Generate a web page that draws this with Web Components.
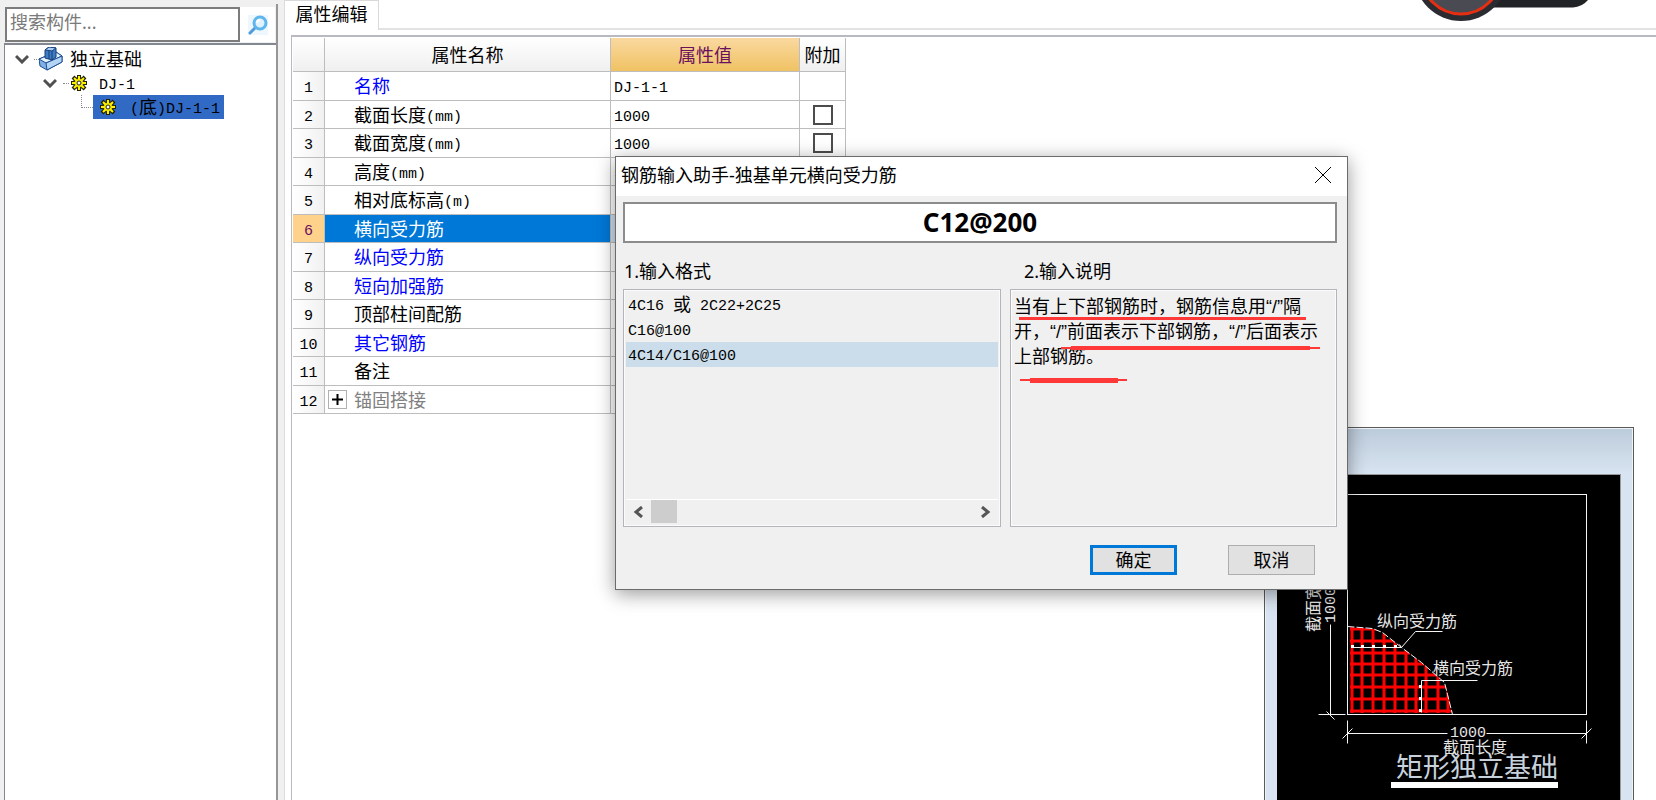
<!DOCTYPE html>
<html lang="zh-CN">
<head>
<meta charset="utf-8">
<title>属性编辑</title>
<style>
  html, body {
    margin: 0;
    height: 100%;
    overflow: hidden;
  }
  body {
    font: 18px/24px "Noto Sans", "Noto Sans CJK SC", sans-serif;
    color: #000;
    background: #fff;
    --mono: "Liberation Mono", "Noto Sans CJK SC", monospace;
    --line: #bdbdbd;
    --face: #f0f0f0;
  }
</style>
</head>
<body>
<bim-app>
  <component-tree slot="side"></component-tree>
  <property-editor></property-editor>
  <preview-window slot="float"></preview-window>
  <record-widget slot="float"></record-widget>
  <rebar-dialog slot="float" heading="钢筋输入助手-独基单元横向受力筋" value="C12@200"></rebar-dialog>
</bim-app>

<script>
// half-width runs go in a mono span, so that two of them are as wide as one CJK glyph
const mixed = text => text.replace(/[\x20-\x7e]+/g, run => `<span class="half">${run}</span>`);

const shared = `
  :host, * { box-sizing: border-box; }
  .half { font-family: var(--mono); font-size: 15px; line-height: 1; vertical-align: 1px; white-space: pre; }
  button, input { font: inherit; color: inherit; margin: 0; }
  button { padding: 0; border: 0; background: none; }
  svg { display: block; }
`;

class BimElement extends HTMLElement {
  constructor() {
    super();
    this.attachShadow({mode: 'open'});
  }

  connectedCallback() {
    this.shadowRoot.innerHTML = `<style>${shared}</style>${this.render()}`;
  }
}

class BimApp extends BimElement {
  render() {
    return `
      <style>
        :host {
          display: grid;
          grid-template-columns: 285px 1fr;
          height: 100vh;
          position: relative;
          overflow: hidden;
        }
      </style>
      <slot name="side"></slot>
      <slot></slot>
      <slot name="float"></slot>
    `;
  }
}

class GearIcon extends BimElement {
  render() {
    return `
      <style>
        :host { display: block; }
      </style>
      <svg width="16" height="16" viewBox="0 0 16 16">
        <g stroke="#222200" stroke-width="4">
          <path d="M8 0V16M0 8H16M2 2L14 14M14 2L2 14"/>
        </g>
        <circle cx="8" cy="8" r="6" fill="#333300"/>
        <path d="M8 1V15M1 8H15M3 3L13 13M13 3L3 13" stroke="#fff200" stroke-width="2"/>
        <circle cx="8" cy="8" r="4" fill="#f6ee00"/>
        <circle cx="8" cy="8" r="2" fill="#fff" stroke="#222"/>
      </svg>
    `;
  }
}

class ComponentTree extends BimElement {
  render() {
    const chevron = `
      <svg width="14" height="10" viewBox="0 0 14 10">
        <path d="M1 2L7 8L13 2" fill="none" stroke="#505050" stroke-width="3"/>
      </svg>`;
    return `
      <style>
        :host {
          display: flex;
          flex-direction: column;
          padding: 4px 6px 0 4px;
          background: var(--face);
          border-right: 1px solid #dcdcdc;
        }
        .panel {
          flex: 1;
          display: flex;
          flex-direction: column;
          border-right: 2px solid #969696;
        }
        .search {
          display: flex;
          align-items: stretch;
          height: 39px;
          padding: 3px 1px 1px 1px;
        }
        .search input {
          flex: 1;
          min-width: 0;
          padding: 0 3px 6px;
          border: 2px solid #7c7c7c;
          border-radius: 0;
          outline: 0;
          background: #fff;
        }
        .search input::placeholder { color: #7a7a7a; opacity: 1; }
        .search button {
          display: grid;
          place-items: center;
          width: 35px;
          background: #fff;
        }
        ul {
          flex: 1;
          margin: 0;
          padding: 2px 0 0 10px;
          list-style: none;
          background: #fff;
          border: solid #828790;
          border-width: 2px 0 0 1px;
        }
        li {
          display: flex;
          align-items: center;
          height: 24px;
        }
        .dots { border-top: 1px dotted #888; }
        .root .dots { width: 5px; margin-left: 5px; }
        .root .label { margin-left: 7px; }
        .child { padding-left: 28px; }
        .child .dots { width: 6px; margin: 0 2px 0 6px; }
        .child .label { margin-left: 12px; }
        .leaf { padding-left: 66px; }
        .leaf .dots {
          align-self: flex-start;
          width: 12px;
          height: 13px;
          border: dotted #888;
          border-width: 0 0 1px 1px;
        }
        .picked {
          display: flex;
          align-items: center;
          gap: 14px;
          padding: 0 4px 0 7px;
          background: #316ac5;
        }
      </style>
      <div class="panel">
        <div class="search">
          <input type="text" placeholder="搜索构件..." aria-label="搜索构件">
          <button type="button" aria-label="搜索">
            <svg width="20" height="20" viewBox="0 0 20 20">
              <rect width="20" height="20" fill="#eef7fd"/>
              <path d="M2 18L8 12" stroke="#4d9bdc" stroke-width="3" stroke-linecap="round"/>
              <circle cx="12" cy="8" r="6" fill="#dff2fe" stroke="#5eb6ec" stroke-width="3"/>
              <path d="M9 8Q9 5 12 5" fill="none" stroke="#fff" stroke-width="2"/>
            </svg>
          </button>
        </div>
        <ul>
          <li class="root">
            ${chevron}<span class="dots"></span>
            <svg width="24" height="24" viewBox="0 0 24 24">
              <path d="M0 12L17 5L23 9V15L8 23L1 19Z" fill="#7fb1e6" stroke="#1d4e91"/>
              <path d="M0 12L17 5L23 9L7 16Z" fill="#e4f0fc" stroke="#1d4e91"/>
              <path d="M7 16L23 9V15L8 23Z" fill="#b4d4f5" stroke="#1d4e91"/>
              <path d="M6 3L10 0L17 1V10L13 13L6 11Z" fill="#3f7cc4" stroke="#173f7a"/>
              <path d="M6 3L10 0L17 1L13 4Z" fill="#a9cdf3" stroke="#173f7a"/>
              <path d="M13 4V13M10 4V12" stroke="#173f7a"/>
            </svg>
            <span class="label">独立基础</span>
          </li>
          <li class="child">
            ${chevron}<span class="dots"></span>
            <gear-icon></gear-icon>
            <span class="label">${mixed('DJ-1')}</span>
          </li>
          <li class="leaf">
            <span class="dots"></span>
            <span class="picked"><gear-icon></gear-icon><span>${mixed('(底)DJ-1-1')}</span></span>
          </li>
        </ul>
      </div>
    `;
  }
}

class PropertyEditor extends BimElement {
  get rows() {
    return [
      {name: '名称', value: 'DJ-1-1', tone: 'key'},
      {name: '截面长度(mm)', value: '1000', extra: true},
      {name: '截面宽度(mm)', value: '1000', extra: true},
      {name: '高度(mm)', value: '500'},
      {name: '相对底标高(m)'},
      {name: '横向受力筋', tone: 'current'},
      {name: '纵向受力筋', tone: 'key'},
      {name: '短向加强筋', tone: 'key'},
      {name: '顶部柱间配筋'},
      {name: '其它钢筋', tone: 'key'},
      {name: '备注'},
      {name: '锚固搭接', tone: 'group'},
    ];
  }

  renderRow({name, value = '', tone = '', extra}, i) {
    const expander = tone === 'group' ? `
      <button type="button" aria-label="展开">
        <svg width="17" height="17" viewBox="0 0 17 17">
          <path d="M3 8.500H14M8.500 3V14" stroke="#000" stroke-width="2"/>
        </svg>
      </button>` : '';
    return `
      <tr class="${tone}">
        <th scope="row">${mixed(String(i + 1))}</th>
        <td class="name"><div>${expander}<span>${mixed(name)}</span></div></td>
        <td class="value">${mixed(value)}</td>
        <td class="extra">${extra ? `<input type="checkbox" aria-label="附加 ${name}">` : ''}</td>
      </tr>`;
  }

  render() {
    return `
      <style>
        :host {
          display: flex;
          flex-direction: column;
          min-width: 0;
          background: #fff;
        }
        .tabs { display: flex; height: 30px; }
        .tabs button {
          width: 94px;
          padding: 0 0 3px;
          border-right: 1px solid #d9d9d9;
          border-top: 1px solid #d9d9d9;
        }
        .tabs::after {
          content: '';
          flex: 1;
          border-bottom: 2px solid #e2e2e2;
        }
        .frame {
          flex: 1;
          margin: 5px 0 0 6px;
          padding: 1px 0 0 1px;
          border: solid #b9b9c1;
          border-width: 2px 0 0 1px;
        }
        table {
          width: 553px;
          table-layout: fixed;
          border-spacing: 0;
        }
        th, td {
          padding: 0;
          font-weight: normal;
          line-height: 22px;
          border: solid var(--line);
          border-width: 0 1px 1px 0;
          overflow: hidden;
          white-space: nowrap;
        }
        thead th {
          height: 34px;
          background: linear-gradient(#fff, #efefef);
        }
        thead .hot {
          color: #6b0f5f;
          background: linear-gradient(#fad9a0, #f0c263);
        }
        tbody tr { height: 29px; }
        tbody tr:nth-child(even) { height: 28px; }
        tbody th { background: linear-gradient(90deg, #fff, #f1f1f1); }
        .name div {
          display: flex;
          align-items: center;
          padding-left: 29px;
        }
        .value { padding-left: 3px; }
        .key .name { color: #00f; }
        .current th { background: #ffd28c; color: #6b0f5f; }
        .current .name { background: #0078d7; color: #fff; }
        .current .value { background: #cde0ef; }
        .group .name { color: #808080; }
        .group .name div { gap: 7px; padding-left: 3px; }
        .group button { border: 1px solid #b0b0b0; }
        input {
          appearance: none;
          display: block;
          width: 20px;
          height: 20px;
          margin: 0 0 0 13px;
          border: 2px solid #4c4c4c;
          background: #fff;
        }
      </style>
      <div class="tabs"><button type="button">属性编辑</button></div>
      <div class="frame">
        <table>
          <colgroup><col width="32"><col width="286"><col width="189"><col width="46"></colgroup>
          <thead>
            <tr><th></th><th>属性名称</th><th class="hot">属性值</th><th>附加</th></tr>
          </thead>
          <tbody>${this.rows.map(this.renderRow).join('')}</tbody>
        </table>
      </div>
    `;
  }
}

class RebarDialog extends BimElement {
  render() {
    const formats = ['4C16 或 2C22+2C25', 'C16@100', '4C14/C16@100'];
    return `
      <style>
        :host {
          position: absolute;
          left: 615px;
          top: 156px;
          width: 733px;
          display: flex;
          flex-direction: column;
          background: var(--face);
          border: 1px solid #6b6b6b;
          box-shadow: 0 4px 18px rgba(0, 0, 0, .4);
        }
        header {
          display: flex;
          align-items: center;
          justify-content: space-between;
          height: 39px;
          padding: 0 16px 3px 5px;
          background: #fff;
        }
        .content {
          display: grid;
          grid-template-columns: 378px 1fr;
          column-gap: 9px;
          padding: 6px 10px 13px 7px;
        }
        .value {
          grid-column: 1 / -1;
          min-width: 0;
          height: 41px;
          padding: 0 0 2px;
          border: 2px solid #8c8c8c;
          border-radius: 0;
          outline: 0;
          background: #fff;
          text-align: center;
          font: bold 26px/35px "Noto Sans", sans-serif;
        }
        .caption { padding: 16px 0 6px 1px; }
        .caption + .caption { padding-left: 14px; }
        .box {
          display: flex;
          flex-direction: column;
          height: 238px;
          border: 1px solid #b4b4bc;
          outline: 1px solid #fbfbfb;
          outline-offset: -2px;
        }
        ul {
          flex: 1;
          margin: 0;
          padding: 2px;
          list-style: none;
        }
        li {
          height: 25px;
          padding-left: 2px;
        }
        li[aria-selected=true] { background: #cbddeb; }
        .scroll {
          display: flex;
          align-items: center;
          height: 27px;
          margin: 0 2px;
          padding: 0 7px 3px;
          border-top: 1px solid #fff;
        }
        .thumb {
          width: 26px;
          height: 23px;
          margin: 0 auto 0 8px;
          background: #cdcdcd;
        }
        .note {
          position: relative;
          padding: 5px 12px 0 3px;
          font-family: "Liberation Sans", "Noto Sans CJK SC", sans-serif;
          line-height: 25px;
        }
        .note p { margin: 0; }
        .note svg { position: absolute; left: 0; top: 0; }
        footer {
          display: flex;
          justify-content: flex-end;
          gap: 51px;
          padding: 5px 32px 14px 0;
        }
        footer button {
          width: 87px;
          height: 30px;
          background: #e1e1e1;
          border: 1px solid #adadad;
        }
        footer .default { border: 3px solid #0078d7; }
      </style>
      <header>
        <span>${this.getAttribute('heading')}</span>
        <button type="button" aria-label="关闭">
          <svg width="16" height="16" viewBox="0 0 16 16">
            <path d="M0 0L16 16M16 0L0 16" stroke="#000"/>
          </svg>
        </button>
      </header>
      <div class="content">
        <input class="value" type="text" value="${this.getAttribute('value')}" aria-label="钢筋信息">
        <div class="caption">1.输入格式</div>
        <div class="caption">2.输入说明</div>
        <div class="box">
          <ul role="listbox" aria-label="输入格式">
            ${formats.map((f, i) => `<li role="option" aria-selected="${i === 2}">${mixed(f)}</li>`).join('')}
          </ul>
          <div class="scroll">
            <svg width="10" height="12" viewBox="0 0 10 12"><path d="M9 1L3 6L9 11" fill="none" stroke="#555" stroke-width="3"/></svg>
            <span class="thumb"></span>
            <svg width="10" height="12" viewBox="0 0 10 12"><path d="M1 1L7 6L1 11" fill="none" stroke="#555" stroke-width="3"/></svg>
          </div>
        </div>
        <div class="box note">
          <p>当有上下部钢筋时，钢筋信息用“/”隔开，“/”前面表示下部钢筋，“/”后面表示上部钢筋。</p>
          <svg width="320" height="110" viewBox="0 0 320 110" fill="#ff3838">
            <rect x="8" y="27" width="287" height="3"/>
            <rect x="50" y="57" width="259" height="2"/>
            <rect x="60" y="56" width="239" height="4"/>
            <rect x="9" y="89" width="107" height="2"/>
            <rect x="19" y="88" width="88" height="5"/>
          </svg>
        </div>
      </div>
      <footer>
        <button type="button" class="default">确定</button>
        <button type="button">取消</button>
      </footer>
    `;
  }
}

// Plan view of the footing, with the cut-away rebar mesh in the corner
class PreviewWindow extends BimElement {
  render() {
    const edge = 'M71 152L96 154L106 158L125 173L145 188L161 202L168 208L171 220L176 240';
    const columns = [75, 85, 96, 107, 118, 129, 139, 149, 161, 171];
    const bars = [154, 166, 178, 189, 200, 212, 224, 236];
    return `
      <style>
        :host {
          position: absolute;
          right: 22px;
          top: 427px;
          bottom: 0;
          width: 370px;
          display: flex;
          flex-direction: column;
          padding: 46px 12px 0;
          background: linear-gradient(#bccbda, #d8e4f1 46px);
          border: solid #5a5a5a;
          border-width: 1px 1px 0;
          box-shadow: inset 1px 1px #eef3f8, inset -1px 0 #eef3f8;
        }
        .canvas {
          flex: 1;
          overflow: hidden;
          background: #000;
          border: solid #999;
          border-width: 1px 1px 0 0;
        }
        text { fill: #e6e6e6; font-family: "Noto Sans CJK SC", sans-serif; font-size: 16px; }
        .num { font-family: var(--mono); font-size: 15px; }
        .title { font-size: 27px; fill: #c8d2dc; }
      </style>
      <div class="canvas">
        <svg width="344" height="325" viewBox="0 0 344 325">
          <clipPath id="cut"><path d="${edge}H71Z"/></clipPath>
          <g clip-path="url(#cut)" stroke="#f00" stroke-width="3">
            ${columns.map(x => `<path d="M${x} 150V238"/>`).join('')}
            ${bars.map(y => `<path d="M73 ${y}H176"/>`).join('')}
          </g>
          <g fill="none" stroke="#f4f4f4" transform="translate(-.5 -.5)">
            <rect x="71" y="20" width="239" height="220"/>
            <path d="${edge}" stroke-dasharray="7 2"/>
            <path d="M54 150V240M42 240H69M50 237L58 245"/>
            <path d="M71 259H171M210 259H310M71 246V269M310 246V269M66 264L76 254M305 264L315 254"/>
            <path d="M75 173H125L139 157H166M123 170L125 173"/>
            <path d="M145 238V206H201"/>
          </g>
          <g fill="#fff">
            ${columns.slice(0, 5).map(x => `<rect x="${x - 1}" y="170" width="3" height="3"/>`).join('')}
            ${[210, 222, 234].map(y => `<rect x="142" y="${y}" width="3" height="3"/>`).join('')}
            <rect x="114" y="307" width="167" height="6"/>
          </g>
          <text x="100" y="152">纵向受力筋</text>
          <text x="156" y="199">横向受力筋</text>
          <text class="num" x="173" y="262">1000</text>
          <text x="166" y="278">截面长度</text>
          <text class="title" x="119" y="302">矩形独立基础</text>
          <text x="-157" y="42" transform="rotate(-90)">截面宽度</text>
          <text class="num" x="-148" y="58" transform="rotate(-90)">1000</text>
        </svg>
      </div>
    `;
  }
}

class RecordWidget extends BimElement {
  render() {
    return `
      <style>
        :host {
          position: absolute;
          right: 64px;
          top: 0;
        }
      </style>
      <svg width="172" height="22" viewBox="0 0 172 22">
        <path d="M60 0H168Q162 7 153 7.500H60Z" fill="#222327"/>
        <circle cx="41" cy="-26" r="47" fill="#2b2c32"/>
        <circle cx="41" cy="-26" r="40" fill="#4a4b52" stroke="#e62e12" stroke-width="3"/>
      </svg>
    `;
  }
}

customElements.define('bim-app', BimApp);
customElements.define('gear-icon', GearIcon);
customElements.define('component-tree', ComponentTree);
customElements.define('property-editor', PropertyEditor);
customElements.define('rebar-dialog', RebarDialog);
customElements.define('preview-window', PreviewWindow);
customElements.define('record-widget', RecordWidget);
</script>
</body>
</html>
